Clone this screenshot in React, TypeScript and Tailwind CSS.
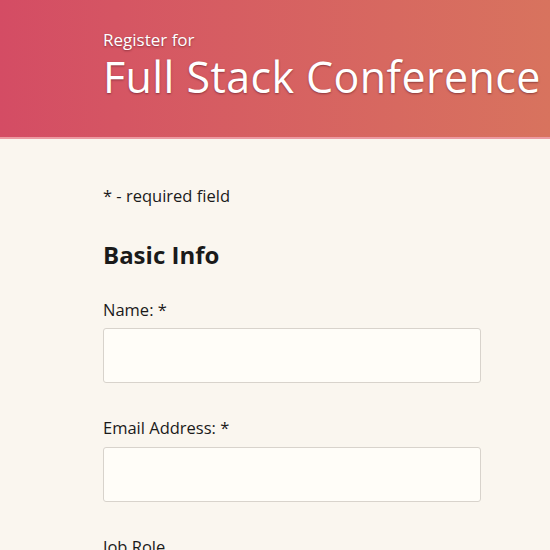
export default function App() {
  return (
    <div className="min-h-[550px] bg-[#faf6ef] text-[#1a1a1a]" style={{ fontFamily: "'Open Sans', 'Noto Sans', sans-serif" }}>
      <header className="h-[139px] bg-gradient-to-r from-[#d44c64] to-[#d8735e] pl-[103px] pt-[29px] text-white border-b-2 border-[#ec9aa2]" style={{ textShadow: "0 1px 2px rgba(80,20,30,0.55)" }}>
        <div className="text-[17px] leading-[22px]">Register for</div>
        <h1 className="text-[43px] leading-[52px] whitespace-nowrap tracking-[0.4px]">Full Stack Conference</h1>
      </header>
      <main className="pl-[103px] pr-[69px] pt-[45px]">
        <p className="text-[16.5px] leading-[24px]">* - required field</p>
        <h2 className="mt-[32px] text-[24px] font-bold leading-[30px]">Basic Info</h2>
        <label className="block mt-[28px] text-[16.5px] leading-[24px]">Name: *</label>
        <div className="mt-[6px] h-[55px] rounded-[3px] border border-[#d8d3cc] bg-[#fffdf8]" />
        <label className="block mt-[33px] text-[16.5px] leading-[24px]">Email Address: *</label>
        <div className="mt-[7px] h-[55px] rounded-[3px] border border-[#d8d3cc] bg-[#fffdf8]" />
        <label className="block mt-[33px] text-[16.5px] leading-[24px]">Job Role</label>
      </main>
    </div>
  );
}
